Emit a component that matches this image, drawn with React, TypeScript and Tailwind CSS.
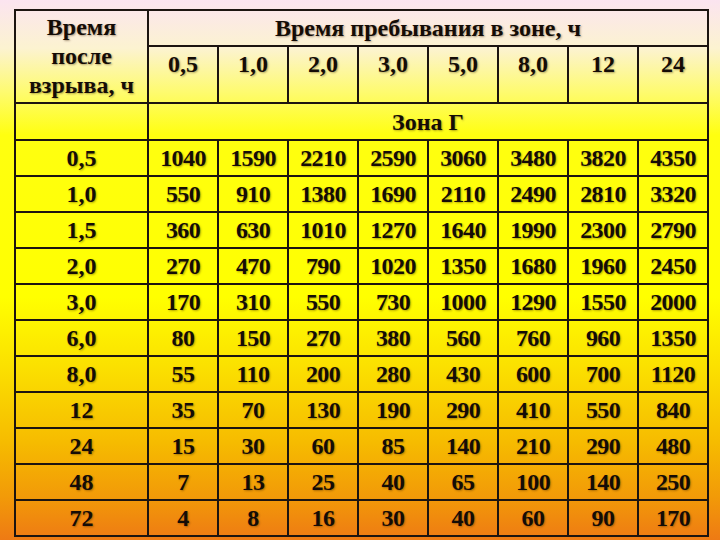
const times = ["0,5", "1,0", "2,0", "3,0", "5,0", "8,0", "12", "24"];

const rows: [string, string[]][] = [
  ["0,5", ["1040", "1590", "2210", "2590", "3060", "3480", "3820", "4350"]],
  ["1,0", ["550", "910", "1380", "1690", "2110", "2490", "2810", "3320"]],
  ["1,5", ["360", "630", "1010", "1270", "1640", "1990", "2300", "2790"]],
  ["2,0", ["270", "470", "790", "1020", "1350", "1680", "1960", "2450"]],
  ["3,0", ["170", "310", "550", "730", "1000", "1290", "1550", "2000"]],
  ["6,0", ["80", "150", "270", "380", "560", "760", "960", "1350"]],
  ["8,0", ["55", "110", "200", "280", "430", "600", "700", "1120"]],
  ["12", ["35", "70", "130", "190", "290", "410", "550", "840"]],
  ["24", ["15", "30", "60", "85", "140", "210", "290", "480"]],
  ["48", ["7", "13", "25", "40", "65", "100", "140", "250"]],
  ["72", ["4", "8", "16", "30", "40", "60", "90", "170"]],
];

const cell = "border-2 border-[#1c1410] text-center p-0";

export default function App() {
  return (
    <div className="w-[720px] h-[540px] overflow-hidden pl-[14px] pt-[9px] bg-[linear-gradient(to_bottom,#fbe4f0_0%,#fcf3d0_9%,#fefb70_17%,#ffff10_25%,#ffff00_55%,#fbe000_68%,#f6bb00_82%,#f29a08_92%,#ee7a14_100%)]">
      <table
        className="border-collapse table-fixed w-[693px] text-[24px] font-bold text-[#140c06] [text-shadow:1px_1px_2px_rgba(60,30,0,0.4)]"
        style={{ fontFamily: '"Liberation Serif", "Times New Roman", serif' }}
      >
        <colgroup>
          <col className="w-[133px]" />
          {times.map((t) => (
            <col key={t} className="w-[70px]" />
          ))}
        </colgroup>
        <thead>
          <tr className="h-[36px]">
            <td rowSpan={2} className={`${cell} leading-[29px] align-middle`}>
              Время
              <br />
              после
              <br />
              взрыва, ч
            </td>
            <td colSpan={8} className={`${cell} leading-[26px]`}>
              Время пребывания в зоне, ч
            </td>
          </tr>
          <tr className="h-[57px]">
            {times.map((t) => (
              <td key={t} className={`${cell} align-top pt-[4px] leading-[26px]`}>
                {t}
              </td>
            ))}
          </tr>
        </thead>
        <tbody>
          <tr className="h-[37px]">
            <td className={cell}></td>
            <td colSpan={8} className={`${cell} leading-[26px]`}>
              Зона Г
            </td>
          </tr>
          {rows.map(([t, vals]) => (
            <tr key={t} className="h-[36px]">
              <td className={`${cell} leading-[26px]`}>{t}</td>
              {vals.map((v, i) => (
                <td key={i} className={`${cell} leading-[26px] tracking-[-0.6px]`}>
                  {v}
                </td>
              ))}
            </tr>
          ))}
        </tbody>
      </table>
    </div>
  );
}
